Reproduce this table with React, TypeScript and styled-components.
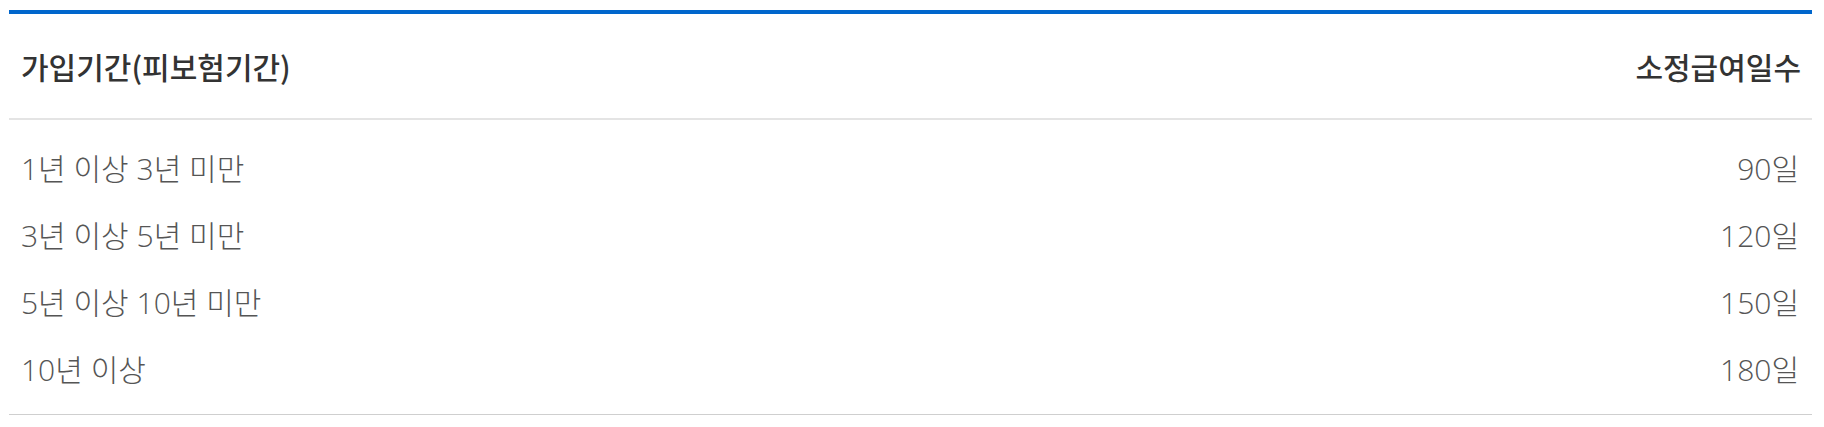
import React from "react";
import styled, { createGlobalStyle } from "styled-components";

const GlobalStyle = createGlobalStyle`
  html, body {
    margin: 0;
    padding: 0;
    background: #ffffff;
  }
  body {
    font-family: "Noto Sans CJK KR", "Noto Sans", sans-serif;
  }
`;

const Wrapper = styled.div`
  padding: 10px 12px 0 9px;
`;

const Table = styled.div`
  border-top: 4px solid #0066cc;
  border-bottom: 1px solid #cfcfcf;
`;

const HeadRow = styled.div`
  display: flex;
  justify-content: space-between;
  align-items: center;
  height: 104px;
  padding: 0 11px 0 12px;
  border-bottom: 2px solid #e4e4e4;
`;

const HeadCell = styled.div`
  font-size: 30px;
  font-weight: 500;
  color: #333333;
`;

const Body = styled.div`
  padding: 13px 0;
`;

const Row = styled.div`
  display: flex;
  justify-content: space-between;
  align-items: center;
  height: 67px;
  padding: 0 13px 0 12px;
`;

const Cell = styled.div`
  font-family: "Open Sans", "Noto Sans CJK KR", sans-serif;
  font-size: 30px;
  font-weight: 300;
  color: #555555;
`;

const rows: [string, string][] = [
  ["1년 이상 3년 미만", "90일"],
  ["3년 이상 5년 미만", "120일"],
  ["5년 이상 10년 미만", "150일"],
  ["10년 이상", "180일"],
];

export default function App() {
  return (
    <>
      <GlobalStyle />
      <Wrapper>
        <Table>
          <HeadRow>
            <HeadCell>가입기간(피보험기간)</HeadCell>
            <HeadCell>소정급여일수</HeadCell>
          </HeadRow>
          <Body>
            {rows.map(([a, b]) => (
              <Row key={a}>
                <Cell>{a}</Cell>
                <Cell>{b}</Cell>
              </Row>
            ))}
          </Body>
        </Table>
      </Wrapper>
    </>
  );
}
